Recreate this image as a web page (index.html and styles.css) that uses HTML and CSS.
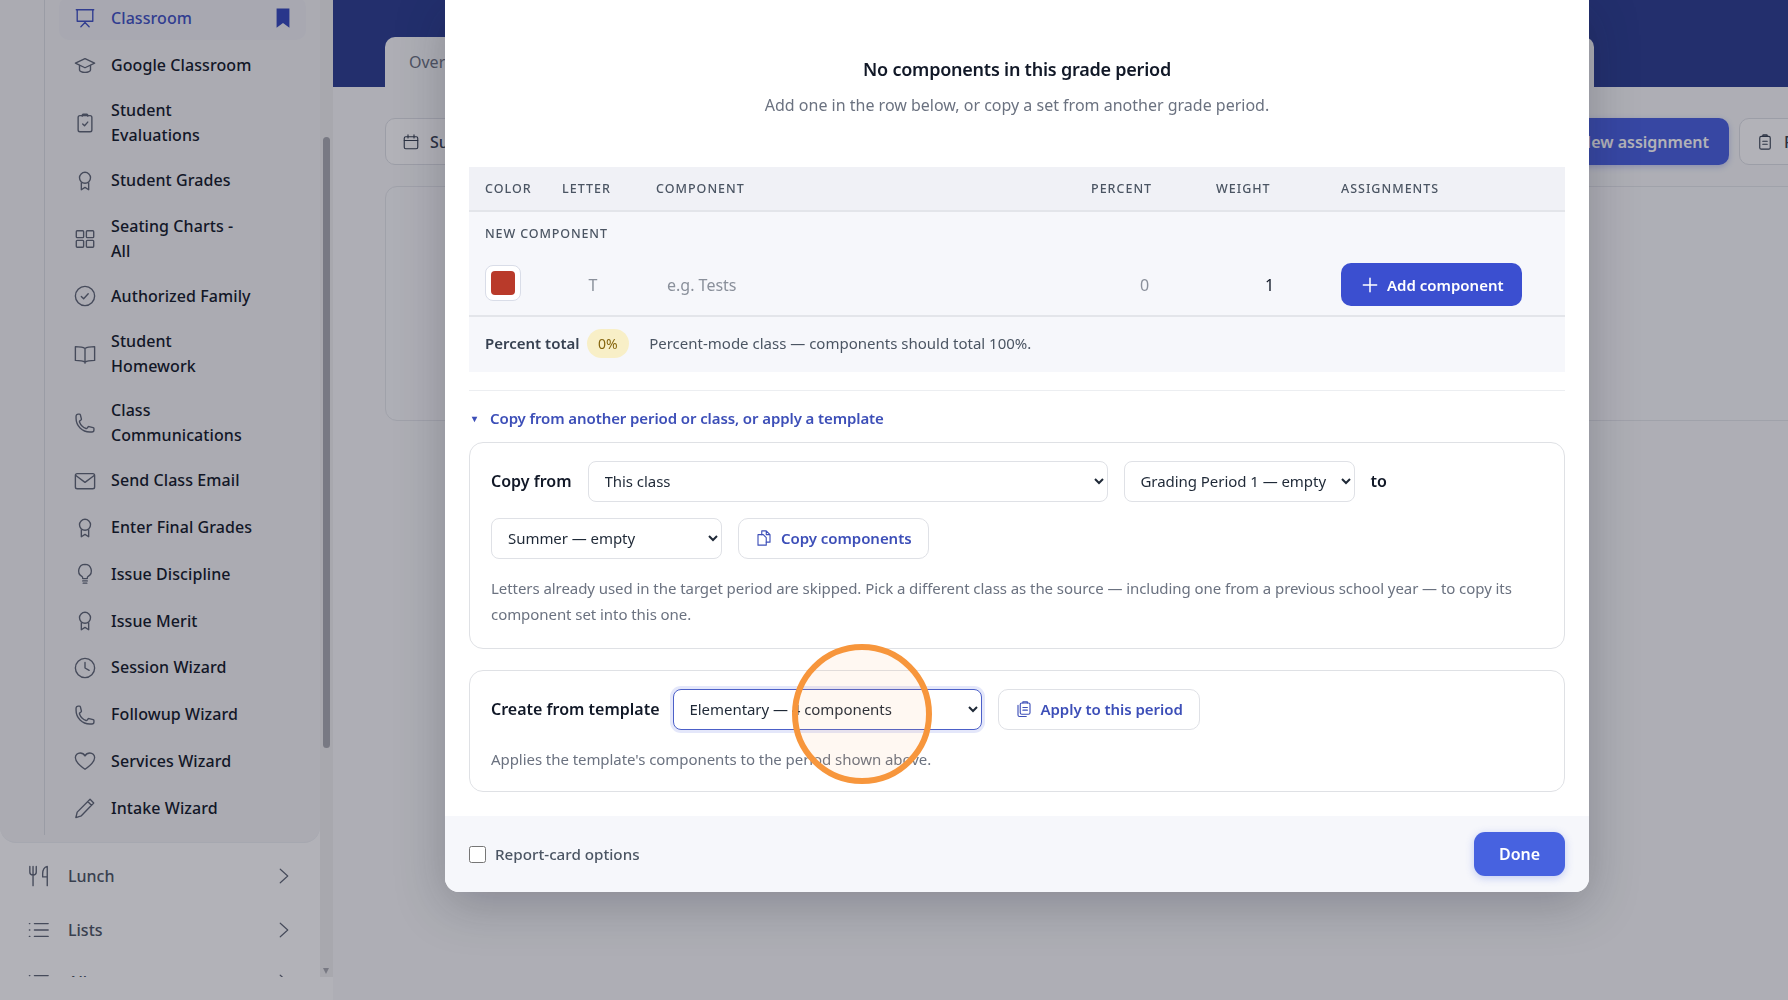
FILE: index.html
```html
<!DOCTYPE html>
<html lang="en">
<head>
    <meta charset="UTF-8">
    <meta name="viewport" content="width=device-width, initial-scale=1.0">
    <title>Grade components</title>
    <link rel="stylesheet" href="styles.css">
</head>
<body>

<svg class="sprite" aria-hidden="true">
    <symbol id="i-board" viewBox="0 0 24 24"><path d="M2.500 3h19M3.500 3v12.500h17V3M12 15.500v1.500M7.500 21.500l4.500-4.500 4.500 4.500"/></symbol>
    <symbol id="i-cap" viewBox="0 0 24 24"><path d="M1.500 10L12 5l10.500 5L12 15z"/><path d="M6 12.500v5c0 1 2.500 2.500 6 2.500s6-1.500 6-2.500v-5"/></symbol>
    <symbol id="i-check-clip" viewBox="0 0 24 24"><rect x="4.500" y="4" width="15" height="17.500" rx="2"/><path d="M9 4.500V3.500a1 1 0 0 1 1-1h4a1 1 0 0 1 1 1v1M9.500 13l2 2 3.500-4"/></symbol>
    <symbol id="i-award" viewBox="0 0 24 24"><circle cx="12" cy="8.500" r="6"/><path d="M8 14v7.500l4-2.500 4 2.500V14"/></symbol>
    <symbol id="i-grid" viewBox="0 0 24 24"><rect x="2.500" y="3" width="8" height="7.500" rx="1"/><rect x="13.500" y="3" width="8" height="7.500" rx="1"/><rect x="2.500" y="13.500" width="8" height="7.500" rx="1"/><rect x="13.500" y="13.500" width="8" height="7.500" rx="1"/></symbol>
    <symbol id="i-check" viewBox="0 0 24 24"><circle cx="12" cy="12" r="10.500"/><path d="M8 12.500l2.500 2.500 5-5.500"/></symbol>
    <symbol id="i-book" viewBox="0 0 24 24"><path d="M12 6C10 4.500 6.500 4 1.500 4v15c5 0 8.500.5 10.500 2 2-1.500 5.500-2 10.500-2V4C17.500 4 14 4.500 12 6zM12 6v16"/></symbol>
    <symbol id="i-phone" viewBox="0 0 24 24"><path d="M2.250 6.750c0 8.284 6.716 15 15 15h2.250a2.250 2.250 0 002.250-2.250v-1.372c0-.516-.351-.966-.852-1.091l-4.423-1.106c-.44-.11-.902.055-1.173.417l-.97 1.293c-.282.376-.769.542-1.210.38a12.035 12.035 0 01-7.143-7.143c-.162-.441.004-.928.38-1.210l1.293-.97c.363-.271.527-.734.417-1.173L6.963 3.102a1.125 1.125 0 00-1.091-.852H4.500A2.250 2.250 0 002.250 4.500v2.250z"/></symbol>
    <symbol id="i-mail" viewBox="0 0 24 24"><rect x="1.500" y="4" width="21" height="16.500" rx="2"/><path d="M2 6l10 7.500L22 6"/></symbol>
    <symbol id="i-bulb" viewBox="0 0 24 24"><path d="M12 1.500a7 7 0 0 0-3.500 13c.7.500 1 1.200 1 2v.500h5v-.5c0-.8.3-1.500 1-2a7 7 0 0 0-3.500-13zM9.500 19.500h5M10 22h4"/></symbol>
    <symbol id="i-clock" viewBox="0 0 24 24"><circle cx="12" cy="12" r="10.500"/><path d="M12 6v6l4.500 2.500"/></symbol>
    <symbol id="i-heart" viewBox="0 0 24 24"><path d="M22.500 8.250c0-2.800-2.400-5-5.200-5-2.200 0-4.300 1.300-5.300 3.200-1-1.900-3.100-3.200-5.300-3.200-2.800 0-5.200 2.200-5.200 5C1.500 14.500 12 21 12 21s10.500-6.500 10.500-12.750z"/></symbol>
    <symbol id="i-pencil" viewBox="0 0 24 24"><path d="M17.500 2.500l4 4L8 20.500l-6 2 1.500-6zM15 5l4 4"/></symbol>
    <symbol id="i-fork" viewBox="0 0 24 24"><path d="M2 1.500v6.500c0 2 1.500 3 3.500 3S9 10 9 8V1.500M5.500 1.500v21M21 1.500c-3 .8-5 3.500-5 8v3.500h5M21 1.500v21"/></symbol>
    <symbol id="i-list" viewBox="0 0 24 24"><path d="M7 5h15M7 12h15M7 19h15M1.500 5h.5M1.500 12h.5M1.500 19h.5"/></symbol>
    <symbol id="i-chev" viewBox="0 0 24 24"><path d="M7 3l10 9-10 9"/></symbol>
    <symbol id="i-cal" viewBox="0 0 24 24"><rect x="3" y="5" width="18" height="16" rx="2"/><path d="M3 10h18M8 2.500v4M16 2.500v4"/></symbol>
    <symbol id="i-clip" viewBox="0 0 24 24"><rect x="5" y="4.500" width="14" height="17" rx="2"/><path d="M9 4.500V3.500a1 1 0 0 1 1-1h4a1 1 0 0 1 1 1v1zM9 11h6M9 15h6"/></symbol>
    <symbol id="i-copy" viewBox="0 0 24 24"><path d="M9 7.500V2.500h6l5 5v10h-5M15 2.500v5h5"/><path d="M4 7.500h7l4 4v10H4z"/></symbol>
    <symbol id="i-clips" viewBox="0 0 24 24"><path d="M4 7v13a2 2 0 0 0 2 2h9"/><rect x="7" y="4" width="13" height="15" rx="2"/><path d="M10.500 4V2.500h6V4M10.500 10h6M10.500 13.500h6"/></symbol>
</svg>

<div class="app">
    <aside class="sidebar">
        <div class="side-scroll">
            <div class="side-panel">
                <ul class="sub-nav">
                    <li class="sub-item active"><svg class="icon"><use href="#i-board"/></svg><span>Classroom</span><svg class="pin" viewBox="0 0 24 24"><path d="M5 1.500h14v21l-7-5-7 5z"/></svg></li>
                    <li class="sub-item"><svg class="icon"><use href="#i-cap"/></svg><span>Google Classroom</span></li>
                    <li class="sub-item"><svg class="icon"><use href="#i-check-clip"/></svg><span>Student<br>Evaluations</span></li>
                    <li class="sub-item"><svg class="icon"><use href="#i-award"/></svg><span>Student Grades</span></li>
                    <li class="sub-item"><svg class="icon"><use href="#i-grid"/></svg><span>Seating Charts -<br>All</span></li>
                    <li class="sub-item"><svg class="icon"><use href="#i-check"/></svg><span>Authorized Family</span></li>
                    <li class="sub-item"><svg class="icon"><use href="#i-book"/></svg><span>Student<br>Homework</span></li>
                    <li class="sub-item"><svg class="icon"><use href="#i-phone"/></svg><span>Class<br>Communications</span></li>
                    <li class="sub-item"><svg class="icon"><use href="#i-mail"/></svg><span>Send Class Email</span></li>
                    <li class="sub-item"><svg class="icon"><use href="#i-award"/></svg><span>Enter Final Grades</span></li>
                    <li class="sub-item"><svg class="icon"><use href="#i-bulb"/></svg><span>Issue Discipline</span></li>
                    <li class="sub-item"><svg class="icon"><use href="#i-award"/></svg><span>Issue Merit</span></li>
                    <li class="sub-item"><svg class="icon"><use href="#i-clock"/></svg><span>Session Wizard</span></li>
                    <li class="sub-item"><svg class="icon"><use href="#i-phone"/></svg><span>Followup Wizard</span></li>
                    <li class="sub-item"><svg class="icon"><use href="#i-heart"/></svg><span>Services Wizard</span></li>
                    <li class="sub-item"><svg class="icon"><use href="#i-pencil"/></svg><span>Intake Wizard</span></li>
                </ul>
            </div>
            <div class="top-item"><svg class="icon"><use href="#i-fork"/></svg><span>Lunch</span><svg class="chev"><use href="#i-chev"/></svg></div>
            <div class="top-item"><svg class="icon"><use href="#i-list"/></svg><span>Lists</span><svg class="chev"><use href="#i-chev"/></svg></div>
            <div class="top-item peek"><svg class="icon"><use href="#i-list"/></svg><span>All</span><svg class="chev"><use href="#i-chev"/></svg></div>
        </div>
        <div class="side-track"><div class="side-thumb"></div><div class="side-arrow"></div></div>
    </aside>

    <main class="main">
        <div class="banner">
            <div class="tabs"><span class="tab-label">Overview</span></div>
        </div>
        <div class="toolbar">
            <button class="tool-btn"><svg class="tool-icon"><use href="#i-cal"/></svg>Summer</button>
            <div class="tool-right">
                <button class="tool-primary">New assignment</button>
                <button class="tool-btn"><svg class="tool-icon"><use href="#i-clip"/></svg>Reports</button>
            </div>
        </div>
        <div class="empty-card"></div>
    </main>
</div>

<div class="backdrop"></div>

<div class="modal">
    <div class="modal-body">
        <div class="empty-head">
            <h2>No components in this grade period</h2>
            <p>Add one in the row below, or copy a set from another grade period.</p>
        </div>

        <table class="comp-table">
            <colgroup>
                <col class="col-color"><col class="col-letter"><col class="col-name"><col class="col-num"><col class="col-num"><col>
            </colgroup>
            <thead>
                <tr><th>Color</th><th>Letter</th><th>Component</th><th>Percent</th><th>Weight</th><th>Assignments</th></tr>
            </thead>
            <tbody>
                <tr class="new-label"><td colspan="6">New component</td></tr>
                <tr class="new-row">
                    <td><span class="swatch"><span class="swatch-fill"></span></span></td>
                    <td><input class="cell-input center" placeholder="T"></td>
                    <td><input class="cell-input" placeholder="e.g. Tests"></td>
                    <td><input class="cell-input center shift" placeholder="0"></td>
                    <td><input class="cell-input center shift" value="1"></td>
                    <td><button class="add-btn"><svg viewBox="0 0 24 24"><path d="M12 4v16M4 12h16"/></svg>Add component</button></td>
                </tr>
                <tr class="total-row">
                    <td colspan="6"><div class="total-wrap"><strong>Percent total</strong><span class="badge">0%</span><span class="total-note">Percent-mode class — components should total 100%.</span></div></td>
                </tr>
            </tbody>
        </table>

        <div class="divider"></div>

        <div class="disclosure"><span class="caret">▾</span>Copy from another period or class, or apply a template</div>

        <section class="tool-card">
            <div class="tool-row">
                <label>Copy from</label>
                <select class="sel sel-class"><option>This class</option></select>
                <select class="sel sel-period"><option>Grading Period 1 — empty</option></select>
                <label>to</label>
            </div>
            <div class="tool-row">
                <select class="sel sel-target"><option>Summer — empty</option></select>
                <button class="ghost-btn"><svg><use href="#i-copy"/></svg>Copy components</button>
            </div>
            <p class="hint">Letters already used in the target period are skipped. Pick a different class as the source — including one from a previous school year — to copy its component set into this one.</p>
        </section>

        <section class="tool-card template-card">
            <div class="tool-row">
                <label>Create from template</label>
                <select class="sel sel-template"><option>Elementary — 4 components</option></select>
                <button class="ghost-btn"><svg><use href="#i-clips"/></svg>Apply to this period</button>
            </div>
            <p class="hint">Applies the template's components to the period shown above.</p>
        </section>
    </div>

    <div class="modal-foot">
        <label class="check-label"><input type="checkbox">Report-card options</label>
        <button class="done-btn">Done</button>
    </div>
</div>

<div class="spot"></div>

</body>
</html>
```

FILE: styles.css
```css
* {
    box-sizing: border-box;
}
html, body {
    height: 100%;
}
body {
    margin: 0;
    overflow: hidden;
    background-color: #fff;
    font-family: "Noto Sans", Arial, sans-serif;
    color: #111827;
}
.sprite {
    display: none;
}
svg {
    fill: none;
    stroke: currentColor;
    stroke-width: 1.5;
    stroke-linecap: round;
    stroke-linejoin: round;
}
.app {
    display: flex;
    height: 1000px;
}

/* sidebar */
.sidebar {
    position: relative;
    display: flex;
    width: 333px;
    flex: none;
    height: 1000px;
    align-items: flex-start;
    background-color: #fff;
}
.side-scroll {
    width: 320px;
    height: 977px;
    overflow: hidden;
}
.side-panel {
    background-color: #f5f5f7;
    border-radius: 0 0 16px 16px;
    border-bottom: 1px solid #eef0f3;
    height: 843px;
    padding-left: 44px;
}
.sub-nav {
    list-style: none;
    margin: 0;
    padding: 0 14px;
    height: 835px;
    border-left: 1px solid #dcdee3;
    display: flex;
    flex-direction: column;
    gap: 4px;
}
.sub-item {
    display: flex;
    align-items: center;
    gap: 15px;
    min-height: 42.800px;
    padding: 7.400px 16px 7.400px 15px;
    font-size: 16px;
    font-weight: 500;
    line-height: 25px;
    letter-spacing: 0.08px;
    color: #111827;
    border-radius: 10px;
}
.sub-item:first-child {
    margin-top: -3px;
}
.sub-item .icon {
    width: 22px;
    height: 22px;
    flex: none;
    color: #5f6675;
}
.sub-item.active {
    background-color: #f0f1f5;
    color: #3f51c4;
}
.sub-item.active .icon {
    color: #3f51c4;
}
.pin {
    width: 22px;
    height: 22px;
    margin-left: auto;
    margin-right: -3.500px;
    fill: #3346bd;
    stroke: none;
}
.top-item {
    display: flex;
    align-items: center;
    height: 54px;
    padding-left: 28px;
    font-size: 16px;
    font-weight: 500;
    color: #4b5563;
}
.side-panel + .top-item {
    margin-top: 6px;
}
.top-item.peek {
    margin-top: -2px;
}
.top-item .icon {
    width: 22px;
    height: 22px;
    margin-right: 18px;
    color: #5f6675;
}
.top-item .chev {
    width: 18px;
    height: 18px;
    margin-left: auto;
    margin-right: 27px;
    color: #5f6675;
    stroke-width: 1.600;
}
.side-track {
    position: relative;
    width: 13px;
    height: 977px;
    background-color: #f1f1f1;
}
.side-thumb {
    position: absolute;
    left: 3px;
    top: 137px;
    width: 7px;
    height: 611px;
    border-radius: 4px;
    background-color: #a9aab0;
}
.side-arrow {
    position: absolute;
    left: 3px;
    bottom: 3px;
    border-left: 3.500px solid transparent;
    border-right: 3.500px solid transparent;
    border-top: 6px solid #a9aab0;
}

/* page behind the dialog */
.main {
    flex: 1;
    min-width: 0;
    background-color: #f9fafb;
    overflow: hidden;
}
.banner {
    height: 87px;
    background-color: #2a3d90;
    padding: 37px 0 0 52px;
}
.tabs {
    width: 1209px;
    height: 50px;
    padding: 14px 24px;
    border-radius: 10px 10px 0 0;
    background-color: #f9fafb;
    font-size: 16px;
    color: #6b7280;
}
.toolbar {
    display: flex;
    justify-content: space-between;
    width: 1566px;
    padding: 31px 0 0 52px;
}
.tool-right {
    display: flex;
    gap: 10px;
}
.tool-btn, .tool-primary {
    display: flex;
    align-items: center;
    height: 47px;
    padding: 0 20px;
    border-radius: 10px;
    border: 1px solid #dfe1e6;
    background-color: #fff;
    font-family: inherit;
    font-size: 16px;
    font-weight: 500;
    color: #374151;
}
.tool-btn {
    padding: 0 16px;
    width: 160px;
}
.tool-primary {
    width: 220px;
    justify-content: flex-end;
    border: none;
    background-color: #4860e0;
    color: #fff;
    font-weight: 600;
    box-shadow: 0 2px 6px rgba(70, 90, 220, 0.3);
}
.tool-icon {
    width: 18px;
    height: 18px;
    margin-right: 10px;
}
.empty-card {
    width: 1500px;
    height: 235px;
    margin: 21px 0 0 52px;
    border: 1px solid #e5e7eb;
    border-radius: 12px;
    background-color: #fafbfc;
}

/* dialog */
.backdrop {
    position: fixed;
    top: 0;
    left: 0;
    width: 100%;
    height: 100%;
    background-color: rgba(20, 20, 40, 0.33);
}
.modal {
    position: fixed;
    top: 0;
    left: 445px;
    width: 1144px;
    height: 892px;
    display: flex;
    flex-direction: column;
    background-color: #fff;
    border-radius: 0 0 14px 14px;
    box-shadow: 0 12px 50px rgba(20, 20, 40, 0.25);
    overflow: hidden;
}
.modal-body {
    flex: 1;
    padding: 0 24px;
}
.empty-head {
    height: 167px;
    padding-top: 55px;
    text-align: center;
}
.empty-head h2 {
    margin: 0;
    font-size: 18px;
    line-height: 28px;
    font-weight: 600;
    letter-spacing: -0.23px;
    color: #111827;
}
.empty-head p {
    margin: 9px 0 0;
    font-size: 16px;
    line-height: 26px;
    color: #6b7280;
}
.comp-table {
    width: 100%;
    border-collapse: collapse;
    table-layout: fixed;
}
.col-color { width: 77px; }
.col-letter { width: 94px; }
.col-name { width: 435px; }
.col-num { width: 125px; }
.comp-table th {
    height: 44px;
    padding: 0 16px;
    text-align: left;
    background-color: #f0f1f6;
    border-bottom: 2px solid #e3e5ea;
    font-size: 12.500px;
    font-weight: 500;
    letter-spacing: 0.08em;
    text-transform: uppercase;
    color: #4b5563;
}
.comp-table td {
    padding: 0 16px;
    background-color: #f6f7fb;
}
.new-label td {
    height: 43px;
    font-size: 12.500px;
    font-weight: 500;
    letter-spacing: 0.07em;
    text-transform: uppercase;
    color: #4b5563;
}
.new-row td {
    height: 62px;
    border-bottom: 2px solid #e3e5ea;
}
.swatch {
    display: block;
    width: 36px;
    height: 36px;
    margin-bottom: 3px;
    padding: 5px;
    border: 1px solid #d9dde8;
    border-radius: 8px;
    background-color: #fff;
}
.swatch-fill {
    display: block;
    width: 100%;
    height: 100%;
    border-radius: 4px;
    background-color: #b93a2a;
}
.cell-input {
    width: 100%;
    padding: 0 11px;
    border: none;
    outline: none;
    background: transparent;
    font-family: inherit;
    font-size: 16px;
    color: #111827;
}
.cell-input::placeholder {
    color: #8a909b;
}
.cell-input.center {
    text-align: center;
}
.cell-input.shift {
    padding-left: 25px;
    padding-right: 11px;
}
.add-btn {
    display: flex;
    align-items: center;
    gap: 7px;
    height: 43px;
    width: 181px;
    padding: 0 10px 0 19px;
    border: none;
    border-radius: 10px;
    background-color: #3b4fd0;
    font-family: inherit;
    font-size: 15px;
    font-weight: 600;
    color: #fff;
    white-space: nowrap;
}
.add-btn svg {
    width: 20px;
    height: 20px;
    stroke-width: 1.800;
}
.comp-table .total-row td {
    height: 55.500px;
    padding-bottom: 2px;
}
.total-wrap {
    display: flex;
    align-items: center;
}
.total-wrap strong {
    font-size: 15px;
    font-weight: 600;
    color: #374151;
}
.badge {
    margin-left: 7px;
    padding: 0 11.500px;
    height: 29px;
    line-height: 29px;
    border-radius: 15px;
    background-color: #f8efc7;
    font-size: 14px;
    color: #86650d;
}
.total-note {
    margin-left: 20px;
    font-size: 15px;
    color: #4b5563;
}
.divider {
    height: 1px;
    margin-top: 18.500px;
    background-color: #eceef1;
}
.disclosure {
    display: flex;
    align-items: center;
    height: 50.500px;
    padding-top: 3px;
    font-size: 15px;
    letter-spacing: -0.1px;
    font-weight: 600;
    color: #3d4fb8;
}
.caret {
    width: 21px;
    padding-left: 3px;
    font-size: 10px;
}
.tool-card {
    padding: 18px 21px 0;
    height: 207px;
    border: 1px solid #dfe1e5;
    border-radius: 14px;
}
.template-card {
    height: 122px;
    margin-top: 21px;
}
.tool-row {
    display: flex;
    align-items: center;
    gap: 16px;
    margin-bottom: 16px;
}
.tool-row label {
    font-size: 16px;
    font-weight: 600;
    white-space: nowrap;
}
.sel {
    height: 41px;
    padding: 0 10px 0 12px;
    border: 1px solid #dfe1e6;
    border-radius: 8px;
    background-color: #fff;
    font-family: inherit;
    font-size: 15px;
    letter-spacing: -0.05px;
    color: #1f2937;
}
.sel-class { width: 520px; }
.sel-period { width: 231px; }
.sel-target { width: 231px; }
.sel-template {
    width: 309px;
    margin-left: -3px;
    border-color: #4c60c8;
    box-shadow: 0 0 0 3px rgba(72, 96, 224, 0.15);
}
.ghost-btn {
    display: flex;
    align-items: center;
    gap: 8px;
    height: 41px;
    padding: 0 16px;
    border: 1px solid #dfe1e6;
    border-radius: 10px;
    background-color: #fff;
    font-family: inherit;
    font-size: 15px;
    letter-spacing: -0.05px;
    font-weight: 600;
    color: #3d4fb8;
    white-space: nowrap;
}
.ghost-btn svg {
    width: 18px;
    height: 18px;
}
.hint {
    margin: 0;
    font-size: 15px;
    letter-spacing: -0.06px;
    line-height: 26.500px;
    color: #6b7280;
}
.modal-foot {
    flex: none;
    display: flex;
    align-items: center;
    justify-content: space-between;
    height: 76px;
    padding: 0 24px;
    background-color: #f6f7fb;
}
.check-label {
    display: flex;
    align-items: center;
    gap: 9px;
    font-size: 15.200px;
    font-weight: 500;
    color: #4b5563;
}
.check-label input {
    width: 17px;
    height: 17px;
    margin: 0;
}
.done-btn {
    width: 91px;
    height: 44px;
    border: none;
    border-radius: 11px;
    background-color: #4762e0;
    box-shadow: 0 2px 8px rgba(71, 98, 224, 0.3);
    font-family: inherit;
    font-size: 16px;
    font-weight: 600;
    color: #fff;
}

/* tutorial highlight ring */
.spot {
    position: fixed;
    left: 792px;
    top: 644px;
    width: 140px;
    height: 140px;
    border: 6.500px solid #f7963c;
    border-radius: 50%;
    background-color: rgba(255, 170, 90, 0.08);
}
```
